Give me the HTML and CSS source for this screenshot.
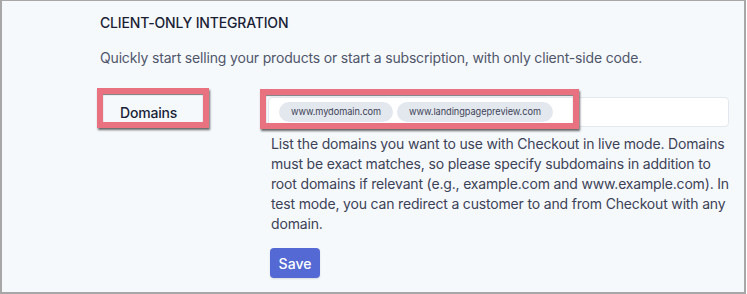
FILE: index.html
```html
<!DOCTYPE html>
<html lang="en">

<head>
    <meta charset="UTF-8">
    <meta name="viewport" content="width=device-width, initial-scale=1.0">
    <title>Client-only integration</title>
    <link rel="stylesheet" href="styles.css">
</head>

<body>
    <div class="frame">
        <h2 class="section-title">Client-only integration</h2>
        <p class="section-intro">Quickly start selling your products or start a subscription, with only client-side code.</p>

        <div class="field-row">
            <div class="field-label">
                <span class="label-text">Domains</span>
                <span class="highlight highlight-label"></span>
            </div>

            <div class="field-body">
                <div class="tag-input">
                    <span class="tag">www.mydomain.com</span>
                    <span class="tag">www.landingpagepreview.com</span>
                    <span class="highlight highlight-tags"></span>
                </div>

                <p class="field-help">
                    List the domains you want to use with Checkout in live mode. Domains<br>
                    must be exact matches, so please specify subdomains in addition to<br>
                    root domains if relevant (e.g., example.com and www.example.com). In<br>
                    test mode, you can redirect a customer to and from Checkout with any<br>
                    domain.
                </p>

                <button class="btn-save" type="button">Save</button>
            </div>
        </div>
    </div>
</body>

</html>
```

FILE: styles.css
```css
* {
    margin: 0;
    padding: 0;
    box-sizing: border-box;
}

body {
    font-family: Inter, "Liberation Sans", Arial, sans-serif;
    color: #3c4257;
    background: #ffffff;
    letter-spacing: -0.17px;
}

.frame {
    width: 746px;
    height: 294px;
    background: #f6f9fc;
    border: 2px solid #a7a7a7;
    border-top-width: 1px;
    padding: 12px 18px 0 98px;
}

.section-title {
    font-size: 14px;
    font-weight: 500;
    line-height: 20px;
    text-transform: uppercase;
    color: #1a1f36;
}

.section-intro {
    font-size: 14px;
    line-height: 20px;
    margin-top: 15px;
    color: #4f566b;
}

.field-row {
    display: grid;
    grid-template-columns: 168px 1fr;
    margin-top: 29px;
}

.field-label {
    position: relative;
    height: 30px;
    display: flex;
    align-items: center;
    padding-left: 20px;
}

.label-text {
    font-size: 14px;
    font-weight: 500;
    color: #1a1f36;
}

.field-body {
    display: flex;
    flex-direction: column;
    align-items: flex-start;
}

.tag-input {
    position: relative;
    width: 100%;
    height: 30px;
    background: #ffffff;
    border: 1px solid #e3e8ee;
    border-radius: 4px;
    display: flex;
    align-items: center;
    gap: 4px;
    padding-left: 10px;
}

.tag {
    font-size: 9.2px;
    line-height: 20px;
    padding: 0 12px;
    border-radius: 10px;
    background: #e3e8ee;
    color: #3c4257;
    letter-spacing: -0.05px;
}

/* red annotation boxes drawn over the form */
.highlight {
    position: absolute;
    border: 6px solid #e8727f;
    box-shadow: 1px 2px 2px rgba(40, 40, 40, 0.7), inset 0 1px 1px rgba(40, 40, 40, 0.6);
    pointer-events: none;
}

.highlight-label {
    left: -3px;
    top: -9px;
    width: 112px;
    height: 40px;
}

.highlight-tags {
    left: -9px;
    top: -9px;
    width: 319px;
    height: 40px;
}

.field-help {
    font-size: 14px;
    line-height: 20px;
    color: #3c4257;
    margin-top: 7px;
    padding-left: 3px;
    white-space: nowrap;
}

.btn-save {
    margin-top: 14px;
    margin-left: 2px;
    width: 50px;
    height: 30px;
    border: none;
    border-radius: 4px;
    background: #5469d4;
    color: #ffffff;
    font-family: inherit;
    font-size: 14px;
    font-weight: 500;
    letter-spacing: 0;
    box-shadow: 0 1px 2px rgba(0, 0, 0, 0.12);
}
```
